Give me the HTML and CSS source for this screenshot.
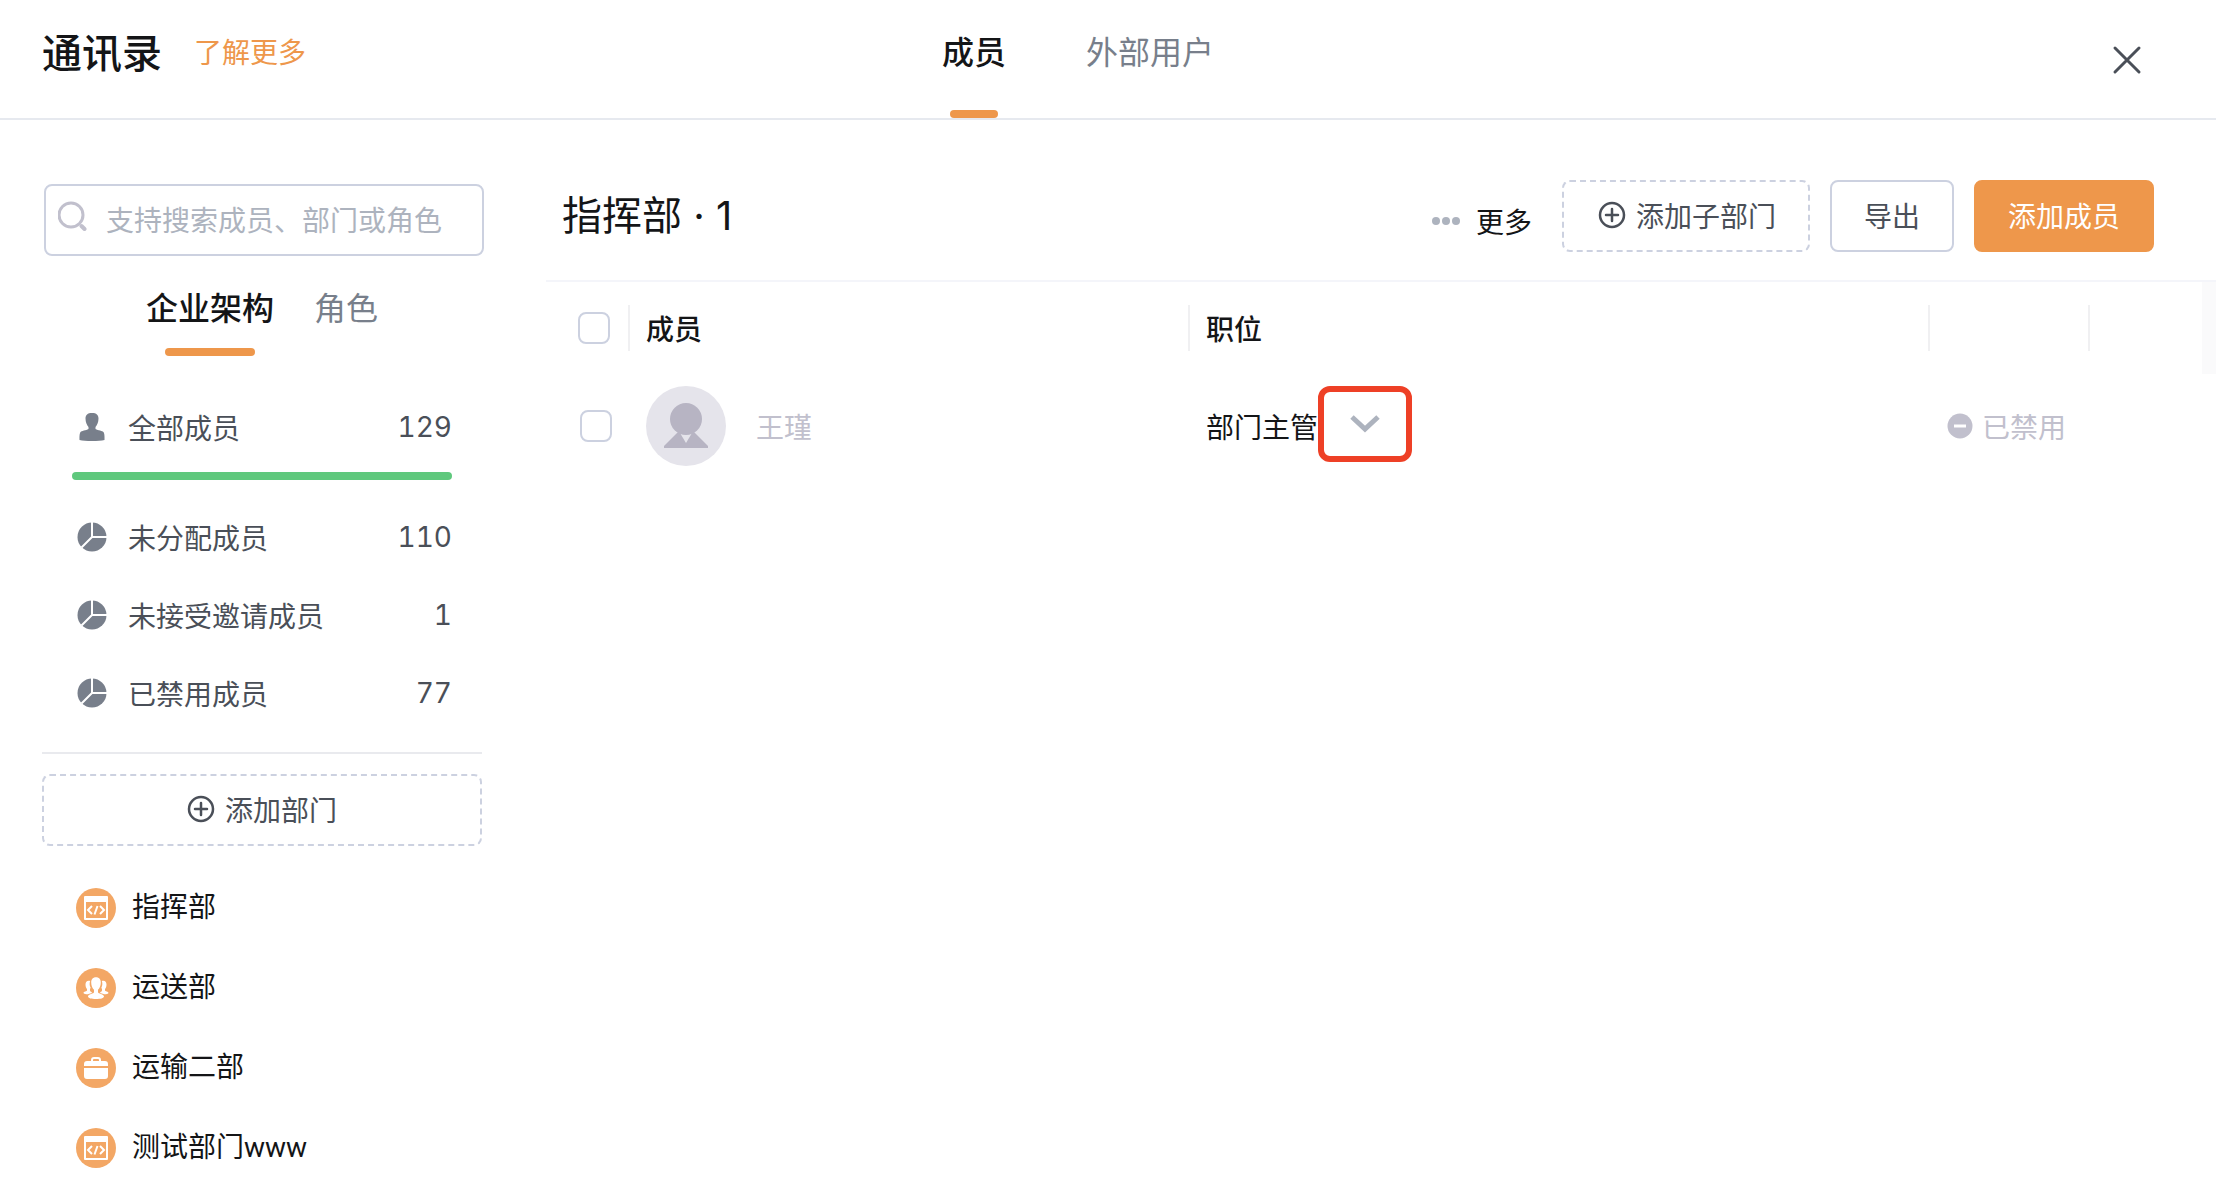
FILE: index.html
```html
<!DOCTYPE html>
<html lang="zh-CN">
<head>
<meta charset="utf-8">
<title>通讯录</title>
<meta name="viewport" content="width=device-width, initial-scale=1">
<link rel="stylesheet" href="styles.css">
</head>
<body>
<svg class="sprite" aria-hidden="true">
  <symbol id="pie" viewBox="0 0 30 30"><circle cx="15" cy="15" r="14.500" fill="currentColor"/><path d="M15 0v15h15M15 15L4.500 25.500" fill="none" stroke="#fff" stroke-width="2"/></symbol>
  <symbol id="plus" viewBox="0 0 28 28"><g fill="none" stroke="currentColor" stroke-width="2.500" stroke-linecap="round"><circle cx="14" cy="14" r="12"/><path d="M14 8v12M8 14h12"/></g></symbol>
  <symbol id="code" viewBox="0 0 40 40"><circle cx="20" cy="20" r="20" fill="#f3a765"/><path fill="#fff" fill-rule="evenodd" d="M9 8h22a1 1 0 0 1 1 1v22a1 1 0 0 1-1 1H9a1 1 0 0 1-1-1V9a1 1 0 0 1 1-1zm1 6v16h20V14z"/><path d="M16 18l-4 4 4 4M24 18l4 4-4 4M21.500 18l-3 8.500" fill="none" stroke="#fff" stroke-width="2"/></symbol>
  <symbol id="group" viewBox="0 0 40 40"><circle cx="20" cy="20" r="20" fill="#f3a765"/><g fill="#fff"><path d="M14.200 13C11.500 12 9.500 13.500 9.500 16.500c0 2 .7 3.500 1.500 4.500v1.500c0 1-3.500 1-3.500 2.500 0 1 2.500 1.300 4.500 1.300 1.500-.8 3.500-1 4-1.800-.2-.8-2-.8-2-2v-1.500c.4-.5.6-1 .6-1.500-1.200-2-1.200-4.500-.4-6.500z"/><path d="M25.800 13c2.700-1 4.700.5 4.700 3.500 0 2-.7 3.500-1.500 4.500v1.500c0 1 3.500 1 3.500 2.500 0 1-2.500 1.300-4.500 1.300-1.500-.8-3.500-1-4-1.800.2-.8 2-.8 2-2v-1.500c-.4-.5-.6-1-.6-1.500 1.200-2 1.200-4.500.4-6.500z"/><path d="M20 9.300c3.200 0 4.800 2.200 4.800 5.200 0 3.200-1.200 5.800-2.800 7.300v2.400c0 1.600 6 1.600 6 4.300 0 1.700-3.500 2.500-8 2.500s-8-.8-8-2.500c0-2.700 6-2.700 6-4.300v-2.400c-1.600-1.500-2.800-4.100-2.800-7.300 0-3 1.600-5.200 4.800-5.200z"/></g></symbol>
  <symbol id="case" viewBox="0 0 40 40"><circle cx="20" cy="20" r="20" fill="#f3a765"/><path d="M16 14v-2a2 2 0 0 1 2-2h4a2 2 0 0 1 2 2v2" fill="none" stroke="#fff" stroke-width="2"/><path fill="#fff" d="M11 13h18a3 3 0 0 1 3 3v2H8v-2a3 3 0 0 1 3-3zM8 20h24v8a3 3 0 0 1-3 3H11a3 3 0 0 1-3-3z"/></symbol>
</svg>

<header class="topbar">
  <div class="brand">
    <h1 class="brand-title">通讯录</h1>
    <a class="brand-link" href="#">了解更多</a>
  </div>
  <nav class="main-tabs">
    <a class="main-tab active" href="#">成员</a>
    <a class="main-tab" href="#">外部用户</a>
  </nav>
  <button class="close" aria-label="关闭"><svg width="30" height="30" viewBox="0 0 30 30"><path d="M3 3l24 24M27 3L3 27" fill="none" stroke="#4a4f58" stroke-width="3" stroke-linecap="round"/></svg></button>
</header>

<div class="layout">
  <aside class="sidebar">
    <label class="search">
      <svg class="search-icon" width="30" height="30" viewBox="0 0 30 30"><circle cx="13" cy="14" r="12" fill="none" stroke="#c1c0cd" stroke-width="3"/><path d="M23.500 25l3 3" stroke="#c1c0cd" stroke-width="4" stroke-linecap="round"/></svg>
      <input type="text" placeholder="支持搜索成员、部门或角色" aria-label="搜索">
    </label>
    <nav class="side-tabs">
      <a class="side-tab active" href="#">企业架构</a>
      <a class="side-tab" href="#">角色</a>
    </nav>
    <ul class="stats">
      <li class="stat stat-all"><svg class="stat-icon" viewBox="0 0 30 30"><path fill="currentColor" d="M15 1c4.500 0 6.500 2 6.500 5.500 0 4-1.500 6.500-3 8.500v2c2.500 1.500 7 1.500 8.300 3.500.8 1.500.8 5 .7 7.500-3 .8-7 1-12.500 1s-9.500-.2-12.500-1c-.1-2.500-.1-6 .7-7.500 1.300-2 5.800-2 8.300-3.500v-2c-1.500-2-3-4.500-3-8.500C8.500 3 10.500 1 15 1z"/></svg><a href="#">全部成员</a><span class="count">129</span></li>
      <li class="stat-bar"></li>
      <li class="stat"><svg class="stat-icon"><use href="#pie"/></svg><a href="#">未分配成员</a><span class="count">110</span></li>
      <li class="stat"><svg class="stat-icon"><use href="#pie"/></svg><a href="#">未接受邀请成员</a><span class="count">1</span></li>
      <li class="stat"><svg class="stat-icon"><use href="#pie"/></svg><a href="#">已禁用成员</a><span class="count">77</span></li>
    </ul>
    <button class="btn dashed add-dept"><svg width="28" height="28"><use href="#plus"/></svg>添加部门</button>
    <ul class="depts">
      <li><a href="#"><svg width="40" height="40"><use href="#code"/></svg>指挥部</a></li>
      <li><a href="#"><svg width="40" height="40"><use href="#group"/></svg>运送部</a></li>
      <li><a href="#"><svg width="40" height="40"><use href="#case"/></svg>运输二部</a></li>
      <li><a href="#"><svg width="40" height="40"><use href="#code"/></svg>测试部门www</a></li>
    </ul>
  </aside>

  <main class="content">
    <div class="content-head">
      <h2 class="content-title">指挥部 · 1</h2>
      <div class="actions">
        <button class="more"><svg width="28" height="8" viewBox="0 0 28 8"><g fill="#adb3be"><circle cx="4" cy="4" r="4"/><circle cx="14" cy="4" r="4"/><circle cx="24" cy="4" r="4"/></g></svg>更多</button>
        <button class="btn dashed add-sub"><svg width="28" height="28"><use href="#plus"/></svg>添加子部门</button>
        <button class="btn">导出</button>
        <button class="btn primary">添加成员</button>
      </div>
    </div>
    <table class="members">
      <colgroup><col class="col-check"><col class="col-name"><col><col class="col-status"><col class="col-ops"><col class="col-gutter"></colgroup>
      <thead>
        <tr>
          <th><div class="cell"><input type="checkbox" aria-label="全选"></div></th>
          <th><div class="cell">成员</div></th>
          <th><div class="cell">职位</div></th>
          <th><div class="cell"></div></th>
          <th></th>
          <th class="gutter"></th>
        </tr>
      </thead>
      <tbody>
        <tr>
          <td class="check"><input type="checkbox" aria-label="选择王瑾"></td>
          <td><div class="person"><svg width="80" height="80" viewBox="0 0 80 80"><circle cx="40" cy="40" r="40" fill="#e5e4eb"/><path fill="#b7b4c3" d="M33 45h14l15 15v2H18v-2z"/><path fill="#e5e4eb" d="M34 47h12l-6 10z"/><circle cx="40" cy="33" r="16" fill="#b7b4c3"/></svg>王瑾</div></td>
          <td><div class="position">部门主管<button class="toggle" aria-label="展开"><svg width="30" height="18" viewBox="0 0 30 18"><path d="M2 2l13 12L28 2" fill="none" stroke="#adb3be" stroke-width="5"/></svg></button></div></td>
          <td><div class="status"><svg width="28" height="28" viewBox="0 0 28 28"><circle cx="14" cy="14" r="12.500" fill="#c1c0cd"/><path d="M8 14h12" stroke="#fff" stroke-width="3"/></svg>已禁用</div></td>
          <td></td>
          <td></td>
        </tr>
      </tbody>
    </table>
  </main>
</div>
</body>
</html>
```
FILE: styles.css
```css
* { box-sizing: border-box; }
body {
  margin: 0;
  background: #fff;
  color: #141517;
  font: 28px/40px "Noto Sans CJK SC", sans-serif;
}
h1, h2, ul { margin: 0; padding: 0; }
ul { list-style: none; }
a { color: inherit; text-decoration: none; }
button { font: inherit; color: inherit; background: none; border: 0; padding: 0; }
svg { display: block; flex: none; }
.sprite { position: absolute; width: 0; height: 0; }

.topbar {
  display: grid;
  grid-template-columns: 1fr auto 1fr;
  height: 120px;
  padding: 0 102px 0 42px;
  border-bottom: 2px solid #e6e9ef;
}
.brand { display: flex; gap: 32px; height: 102px; align-items: center; }
.brand-title { font-size: 40px; font-weight: 500; }
.brand-link { color: #ee974b; }
.main-tabs { display: flex; gap: 80px; font-size: 32px; line-height: 100px; color: #787f8b; }
.main-tab, .side-tab { position: relative; }
.main-tab.active, .side-tab.active { color: #141517; font-weight: 500; }
.active::after {
  content: "";
  position: absolute;
  left: 8px;
  right: 8px;
  bottom: 0;
  height: 8px;
  border-radius: 4px;
  background: #ee974b;
}
.close { justify-self: end; align-self: center; margin: 2px -28px 0 0; }

.layout { display: grid; grid-template-columns: 546px 1fr; }
.sidebar { padding: 64px 64px 0 42px; }
.search {
  display: flex;
  align-items: center;
  gap: 18px;
  height: 72px;
  margin: 0 -2px 0 2px;
  padding: 0 12px;
  border: 2px solid #ccd1e0;
  border-radius: 8px;
}
.search-icon { margin-bottom: 8px; }
.search input { flex: 1; min-width: 0; height: 40px; margin-bottom: 2px; padding: 0; border: 0; outline: 0; font: inherit; background: none; }
.search input::placeholder { color: #adb3be; opacity: 1; }
.side-tabs { display: flex; justify-content: center; gap: 40px; height: 100px; line-height: 100px; font-size: 32px; color: #787f8b; }
.side-tab.active::after { left: 19px; right: 19px; }

.stats { padding: 32px 30px 20px; border-bottom: 2px solid #e9eaee; color: #4a4f58; }
.stat { display: flex; align-items: center; height: 78px; padding-left: 5px; }
.stat-icon { width: 30px; height: 30px; margin-right: 21px; color: #787f8b; }
.stat-all { height: 84px; padding-bottom: 6px; }
.stat-bar { height: 8px; margin-bottom: 18px; border-radius: 4px; background: #5fc87d; }
.count { margin-left: auto; font-family: Inter, sans-serif; font-variant-numeric: tabular-nums; }

.btn {
  display: flex;
  align-items: center;
  justify-content: center;
  gap: 10px;
  height: 72px;
  padding: 0 32px 2px;
  border: 2px solid #ccd1e0;
  border-radius: 8px;
  color: #4a4f58;
}
.dashed { border-style: dashed; }
.primary { border-color: #ee974b; background: #ee974b; color: #fff; }
.add-dept { width: 100%; margin: 20px 0 22px; }
.add-sub { padding-left: 34px; }

.depts a { display: flex; align-items: center; gap: 16px; height: 80px; padding-left: 34px; font-family: Roboto, "Noto Sans CJK SC", sans-serif; }

.content-head { display: flex; align-items: center; justify-content: space-between; height: 162px; padding: 60px 62px 28px 16px; border-bottom: 2px solid #f4f5fa; }
.content-title { font-family: Inter, "Noto Sans CJK SC", sans-serif; font-size: 40px; font-weight: 400; }
.actions { display: flex; gap: 20px; }
.more { display: flex; align-items: center; gap: 16px; margin-right: 10px; padding-top: 10px; }

.members { width: 100%; table-layout: fixed; border-collapse: collapse; }
.members th, .members td { padding: 0; text-align: left; font-weight: 400; }
.members th { height: 92px; font-weight: 500; }
.members th:not(:first-child) .cell, .members td + td { padding-left: 16px; }
.cell { display: flex; align-items: center; height: 46px; border-right: 2px solid #f0f0f2; }
.members th:first-child .cell { padding-left: 32px; }
.col-check { width: 84px; }
.col-name { width: 560px; }
.col-status { width: 160px; }
.col-ops { width: 112px; }
.col-gutter { width: 14px; }
.gutter { background: #fafafb; }
.members td { height: 104px; }
.members td.check { padding-left: 34px; }
input[type="checkbox"] { display: block; appearance: none; width: 32px; height: 32px; margin: 0; border: 2px solid #ccd1e0; border-radius: 8px; background: #fff; }
.person { display: flex; align-items: center; gap: 30px; color: #c1c0cd; }
.position { display: flex; align-items: center; }
.toggle { display: grid; place-items: center; width: 94px; height: 76px; margin-bottom: 4px; border: 6px solid #ee4026; border-radius: 12px; }
.status { display: flex; align-items: center; gap: 8px; color: #c1c0cd; }
```
